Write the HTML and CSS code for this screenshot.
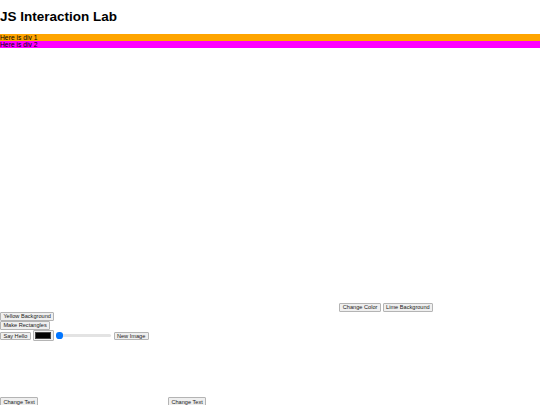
FILE: index.html
```html
<!DOCTYPE html>
<html lang="en">
<head>
<meta charset="utf-8">
<title>JS Interaction Lab</title>
<link rel="stylesheet" href="styles.css">
</head>
<body>
<h1 class="title">JS Interaction Lab</h1>
<div class="band band-orange">Here is div 1</div>
<div class="band band-magenta">Here is div 2</div>
<div class="row row-stage">
  <div class="stage"></div>
  <button class="btn">Change Color</button>
  <button class="btn">Lime Background</button>
</div>
<div class="row"><button class="btn">Yellow Background</button></div>
<div class="row"><button class="btn">Make Rectangles</button></div>
<div class="row row-controls">
  <button class="btn">Say Hello</button>
  <input class="picker" type="color" value="#000000">
  <input class="slider" type="range" min="0" max="100" value="0">
  <button class="btn">New Image</button>
</div>
<div class="cols">
  <div class="col"><button class="btn">Change Text</button></div>
  <div class="col"><button class="btn">Change Text</button></div>
</div>
</body>
</html>
```
FILE: styles.css
```css
body {
  margin: 0;
  font-family: "Liberation Sans", Arial, sans-serif;
  font-size: 6.75px;
  color: #000;
  background: #fff;
}
.title {
  font-size: 13.5px;
  line-height: 15.5px;
  font-weight: bold;
  margin: 9px 0 9.5px;
}
.band {
  line-height: 7px;
  height: 7px;
}
.band-orange {
  background: #ffa500;
}
.band-magenta {
  background: #ff00ff;
}
.row {
  display: flex;
  align-items: flex-end;
  gap: 1.9px;
  height: 8.9px;
}
.row-stage {
  height: auto;
  margin-top: -0.2px;
}
.stage {
  width: 337.5px;
  height: 264px;
}
.row-controls {
  align-items: center;
  height: 11.4px;
  margin-top: 0.3px;
}
.row-controls .btn {
  margin-top: 0.8px;
}
.btn {
  box-sizing: border-box;
  height: 8.8px;
  margin: 0;
  padding: 0 2.4px;
  font-family: "Liberation Sans", Arial, sans-serif;
  font-size: 5.625px;
  line-height: 6px;
  color: #1a1a1a;
  background: #efefef;
  border: 1px solid #b4b4b4;
  border-radius: 1px;
  white-space: nowrap;
}
.picker {
  box-sizing: border-box;
  width: 21px;
  height: 11.4px;
  margin: 0;
  padding: 0.4px 0.8px;
  border: 1px solid #b4b4b4;
  border-radius: 1px;
  background: #efefef;
}
.picker::-webkit-color-swatch-wrapper {
  padding: 1.2px 0.8px;
}
.picker::-webkit-color-swatch {
  border: 0.8px solid #444;
  border-radius: 0;
}
.slider {
  -webkit-appearance: none;
  appearance: none;
  width: 54.4px;
  height: 7px;
  margin: 0 0.84px;
  padding: 0;
  background: transparent;
}
.slider::-webkit-slider-runnable-track {
  height: 2.4px;
  background: #e3e3e3;
  border: none;
  border-radius: 2px;
}
.slider::-webkit-slider-thumb {
  -webkit-appearance: none;
  appearance: none;
  width: 6.2px;
  height: 6.2px;
  margin-top: -1.9px;
  border: none;
  border-radius: 50%;
  background: #0075ff;
}
.cols {
  display: flex;
  margin-top: 56.2px;
}
.col {
  width: 168px;
}
```
